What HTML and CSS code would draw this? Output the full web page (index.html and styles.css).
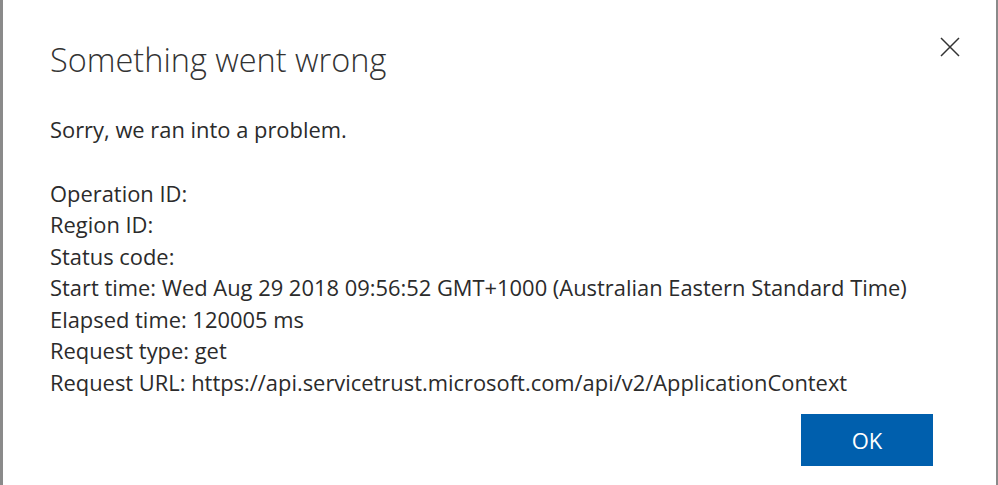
FILE: index.html
```html
<!DOCTYPE html>
<html>
<head>
<meta charset="utf-8">
<link rel="stylesheet" href="styles.css">
</head>
<body>
<div class="dialog">
  <div class="header">
    <h1 class="title">Something went wrong</h1>
    <button class="close" aria-label="Close">
      <svg width="20" height="20" viewBox="0 0 20 20"><path d="M1 1 L19 19 M19 1 L1 19" stroke="#333" stroke-width="1.5" fill="none"/></svg>
    </button>
  </div>
  <div class="content">
    <p class="intro">Sorry, we ran into a problem.</p>
    <div class="details">
      <div>Operation ID:</div>
      <div>Region ID:</div>
      <div>Status code:</div>
      <div>Start time: Wed Aug 29 2018 09:56:52 GMT+1000 (Australian Eastern Standard Time)</div>
      <div>Elapsed time: 120005 ms</div>
      <div>Request type: get</div>
      <div>Request URL: https://api.servicetrust.microsoft.com/api/v2/ApplicationContext</div>
    </div>
  </div>
  <div class="footer">
    <button class="ok">OK</button>
  </div>
</div>
</body>
</html>
```
FILE: styles.css
```css
html, body {
  margin: 0;
  padding: 0;
  height: 100%;
  background: #ffffff;
}
.dialog {
  box-sizing: border-box;
  height: 485px;
  width: 998px;
  border-left: 3px solid #8a8a8a;
  border-right: 2px solid #8a8a8a;
  padding: 0 0 0 47px;
  font-family: "Open Sans", "Noto Sans", sans-serif;
  color: #2b2b2b;
  display: flex;
  flex-direction: column;
}
.header {
  display: flex;
  justify-content: space-between;
  align-items: flex-start;
  padding-top: 36px;
  padding-right: 36px;
}
.title {
  margin: 0;
  font-weight: 300;
  font-size: 32.5px;
  line-height: 48px;
  color: #333;
}
.close {
  border: 0;
  background: none;
  padding: 0;
  margin-top: 1px;
  width: 20px;
  height: 20px;
}
.content {
  font-size: 21.9px;
  line-height: 31.5px;
}
.intro {
  margin: 30px 0 32px;
}
.footer {
  display: flex;
  justify-content: flex-end;
  padding: 16px 63px 0 0;
}
.ok {
  width: 132px;
  height: 52px;
  border: 0;
  background: #005fad;
  color: #fff;
  font-family: "Open Sans", sans-serif;
  font-size: 22px;
}
```
